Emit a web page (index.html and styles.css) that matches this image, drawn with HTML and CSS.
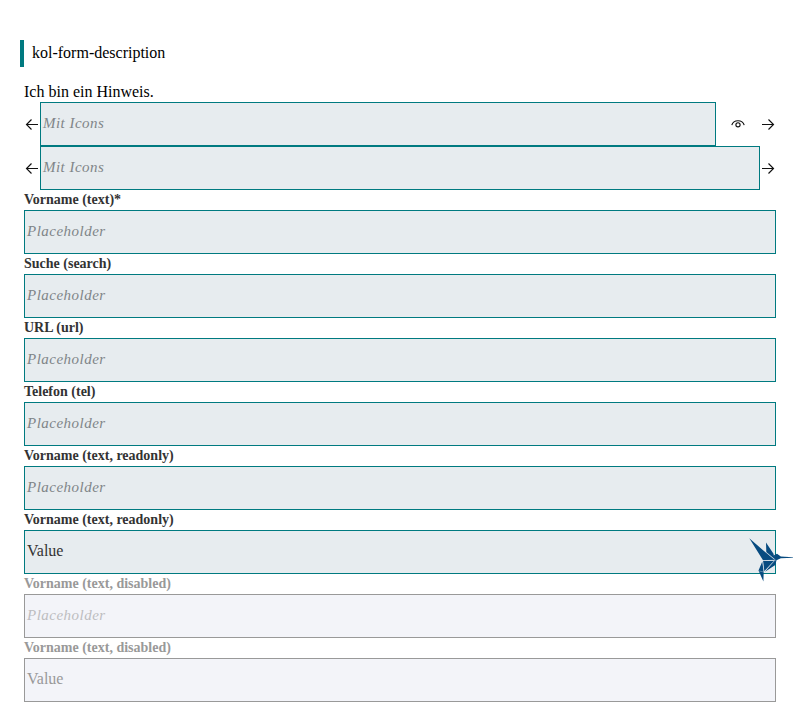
FILE: index.html
```
<!DOCTYPE html>
<html lang="de">
<head>
<meta charset="utf-8">
<title>kol-form-description</title>
<link rel="stylesheet" href="styles.css">
</head>
<body>
<svg width="0" height="0" class="defs">
  <symbol id="left" viewBox="0 0 16 16"><path d="M14 8.5H2.5M7.5 3.5L2.5 8.5L7.5 13.5" /></symbol>
  <symbol id="right" viewBox="0 0 16 16"><path d="M2 8.5H13.5M8.5 3.5L13.5 8.5L8.5 13.5" /></symbol>
  <symbol id="eye" viewBox="0 0 16 16"><path d="M1.8 9.2C3.5 3.3 12.5 3.3 14.2 9.2" /><circle cx="8" cy="8.8" r="2.1" /></symbol>
</svg>
<header><p>kol-form-description</p></header>
<main>
  <p class="hint">Ich bin ein Hinweis.</p>
  <div class="row"><svg class="icon"><use href="#left"/></svg><div class="box"><span class="ph">Mit Icons</span></div><span class="toggle"><svg class="icon eye"><use href="#eye"/></svg></span><svg class="icon"><use href="#right"/></svg></div>
  <div class="row"><svg class="icon"><use href="#left"/></svg><div class="box"><span class="ph">Mit Icons</span></div><svg class="icon"><use href="#right"/></svg></div>
  <div class="field"><span class="label">Vorname (text)*</span><div class="box"><span class="ph">Placeholder</span></div></div>
  <div class="field"><span class="label">Suche (search)</span><div class="box"><span class="ph">Placeholder</span></div></div>
  <div class="field"><span class="label">URL (url)</span><div class="box"><span class="ph">Placeholder</span></div></div>
  <div class="field"><span class="label">Telefon (tel)</span><div class="box"><span class="ph">Placeholder</span></div></div>
  <div class="field"><span class="label">Vorname (text, readonly)</span><div class="box"><span class="ph">Placeholder</span></div></div>
  <div class="field"><span class="label">Vorname (text, readonly)</span><div class="box"><span class="value">Value</span></div></div>
  <div class="field disabled"><span class="label">Vorname (text, disabled)</span><div class="box"><span class="ph">Placeholder</span></div></div>
  <div class="field disabled"><span class="label">Vorname (text, disabled)</span><div class="box"><span class="value">Value</span></div></div>
</main>
<svg class="bird" viewBox="0 0 44 44"><path d="M.3 .3L13.5 11.8L25.5 21.8L14 22.3ZM17 4.5L24.5 15.8L25.7 21.2L17.3 14.2ZM25 17.2L28 15.8L31.8 18.5L44 19.3V19.8L31.8 20.3L27.5 22.3L26.3 27L16 33.8L25.5 22.5ZM14 23L25 22.7L15.3 33.2ZM13.3 23.5L14.7 33.5L14.4 43.5L9.5 32.5Z"/><path class="seam" d="M13.8 22.6L27.2 22.1M15.3 12.6L26 21.6M25.8 22.5L15.3 33.8M13.7 23L15 34L10 33"/></svg>
</body>
</html>
```
FILE: styles.css
```
body { margin: 0; padding: 40px 20px 24px; background: #fff; color: #000; font: 16px/20px "Liberation Serif", "Times New Roman", serif; }
p { margin: 0; }
.defs { position: absolute; }
header { border-left: 4px solid #007a80; padding-left: 8px; height: 27px; line-height: 25px; }
main { padding: 15px 4px 0; }
.hint { line-height: 20px; }
.row { display: flex; align-items: center; }
.row .box { flex: 1; }
.icon { width: 16px; height: 16px; display: block; flex: none; fill: none; stroke: #111; stroke-width: 1.15; }
.toggle { width: 44px; display: flex; justify-content: center; }
.box { height: 44px; box-sizing: border-box; border: 1px solid #007a80; background: #e7ecef; padding: 0 2px; line-height: 39px; color: #333; }
.label { display: block; height: 20px; line-height: 20px; font-size: 14px; font-weight: bold; color: #333; }
.ph { font-size: 15px; font-style: italic; color: #808588; letter-spacing: .48px; }
.value { display: block; }
.disabled .label { color: #999; }
.disabled .box { border-color: #999; background: #f3f4f9; color: #999; }
.disabled .ph { color: #bdbdc0; }
.bird { position: absolute; left: 749px; top: 538px; width: 44px; height: 44px; fill: #074b80; }
.seam { fill: none; stroke: #e7ecef; stroke-width: .35; }
```
